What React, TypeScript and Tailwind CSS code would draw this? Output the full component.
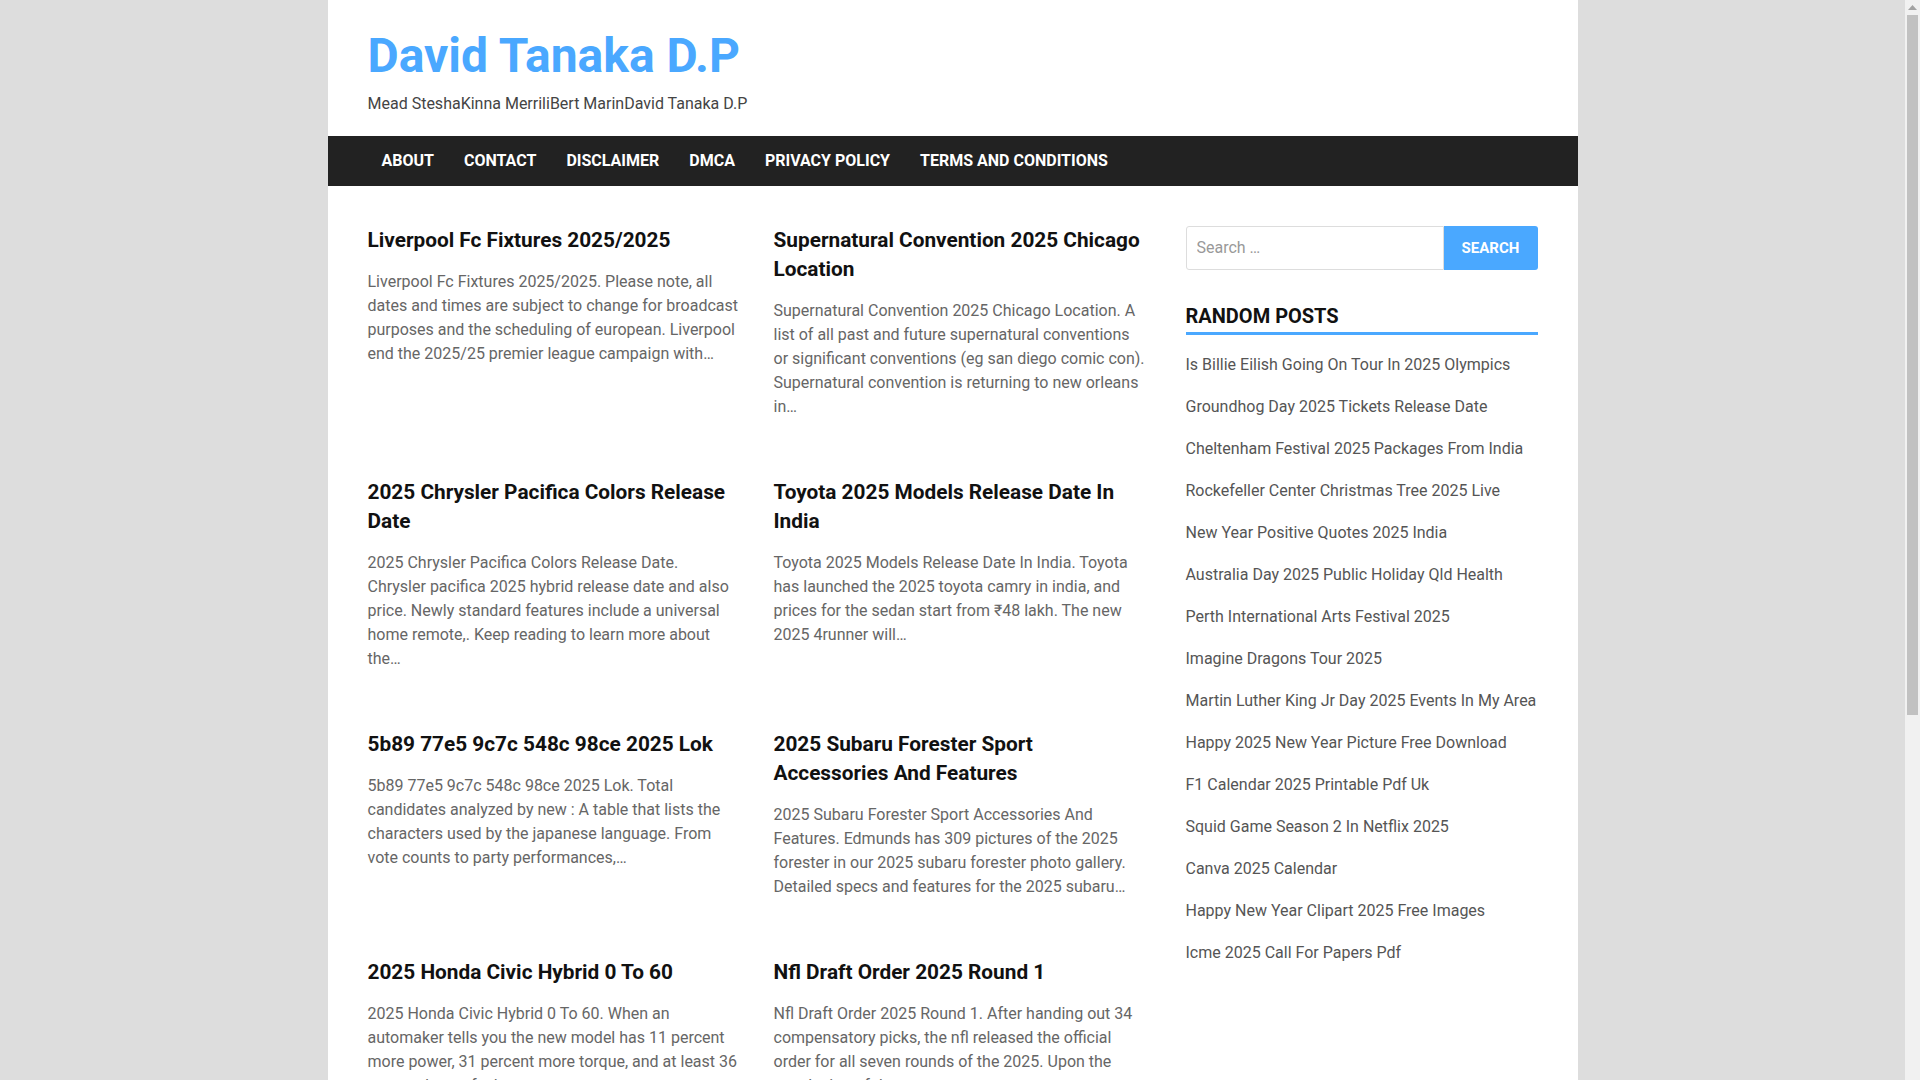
const navItems = ["About", "Contact", "Disclaimer", "DMCA", "Privacy Policy", "Terms and Conditions"];

const posts = [
  {
    title: "Liverpool Fc Fixtures 2025/2025",
    excerpt:
      "Liverpool Fc Fixtures 2025/2025. Please note, all dates and times are subject to change for broadcast purposes and the scheduling of european. Liverpool end the 2025/25 premier league campaign with…",
  },
  {
    title: "Supernatural Convention 2025 Chicago Location",
    excerpt:
      "Supernatural Convention 2025 Chicago Location. A list of all past and future supernatural conventions or significant conventions (eg san diego comic con). Supernatural convention is returning to new orleans in…",
  },
  {
    title: "2025 Chrysler Pacifica Colors Release Date",
    excerpt:
      "2025 Chrysler Pacifica Colors Release Date. Chrysler pacifica 2025 hybrid release date and also price. Newly standard features include a universal home remote,. Keep reading to learn more about the…",
  },
  {
    title: "Toyota 2025 Models Release Date In India",
    excerpt:
      "Toyota 2025 Models Release Date In India. Toyota has launched the 2025 toyota camry in india, and prices for the sedan start from ₹48 lakh. The new 2025 4runner will…",
  },
  {
    title: "5b89 77e5 9c7c 548c 98ce 2025 Lok",
    excerpt:
      "5b89 77e5 9c7c 548c 98ce 2025 Lok. Total candidates analyzed by new : A table that lists the characters used by the japanese language. From vote counts to party performances,…",
  },
  {
    title: "2025 Subaru Forester Sport Accessories And Features",
    excerpt:
      "2025 Subaru Forester Sport Accessories And Features. Edmunds has 309 pictures of the 2025 forester in our 2025 subaru forester photo gallery. Detailed specs and features for the 2025 subaru…",
  },
  {
    title: "2025 Honda Civic Hybrid 0 To 60",
    excerpt:
      "2025 Honda Civic Hybrid 0 To 60. When an automaker tells you the new model has 11 percent more power, 31 percent more torque, and at least 36 percent better fuel economy, you…",
  },
  {
    title: "Nfl Draft Order 2025 Round 1",
    excerpt:
      "Nfl Draft Order 2025 Round 1. After handing out 34 compensatory picks, the nfl released the official order for all seven rounds of the 2025. Upon the conclusion of the…",
  },
];

const randomPosts = [
  "Is Billie Eilish Going On Tour In 2025 Olympics",
  "Groundhog Day 2025 Tickets Release Date",
  "Cheltenham Festival 2025 Packages From India",
  "Rockefeller Center Christmas Tree 2025 Live",
  "New Year Positive Quotes 2025 India",
  "Australia Day 2025 Public Holiday Qld Health",
  "Perth International Arts Festival 2025",
  "Imagine Dragons Tour 2025",
  "Martin Luther King Jr Day 2025 Events In My Area",
  "Happy 2025 New Year Picture Free Download",
  "F1 Calendar 2025 Printable Pdf Uk",
  "Squid Game Season 2 In Netflix 2025",
  "Canva 2025 Calendar",
  "Happy New Year Clipart 2025 Free Images",
  "Icme 2025 Call For Papers Pdf",
];

function Scrollbar() {
  // the page scrollbar seen on the right of the screenshot
  return (
    <div className="flex w-[15px] shrink-0 flex-col items-center bg-[#f1f1f1]">
      <div className="flex h-[15px] w-full items-center justify-center">
        <svg width="9" height="5" viewBox="0 0 9 5">
          <path d="M0 5 L4.5 0 L9 5 Z" fill="#a3a3a3" />
        </svg>
      </div>
      <div className="h-[700px] w-[11px] bg-[#c1c1c1]" />
    </div>
  );
}

export default function App() {
  return (
    <div className="flex h-screen bg-[#dddddd] font-['Roboto',sans-serif]">
      <div className="min-w-0 flex-1 overflow-hidden">
        <div className="mx-auto w-[1250px] bg-white">
          <header className="h-[136px] px-10 pt-[26px]">
            <h1 className="text-[48px] font-bold leading-[60px] text-[#4aa8ff]">
              <a href="#">David Tanaka D.P</a>
            </h1>
            <p className="mt-[6px] text-[16px] leading-[24px] text-[#444444]">
              Mead SteshaKinna MerriliBert MarinDavid Tanaka D.P
            </p>
          </header>

          <nav className="flex h-[50px] items-center bg-[#222222] pl-[39px]">
            {navItems.map((item) => (
              <a
                key={item}
                href="#"
                className="px-[15px] text-[16px] font-bold uppercase leading-[50px] text-white"
              >
                {item}
              </a>
            ))}
          </nav>

          <div className="flex gap-[39px] px-10 pt-10 pb-10">
            <main className="grid w-[779px] shrink-0 grid-cols-2 gap-x-[33px]">
              {posts.map((post) => (
                <article key={post.title} className="pb-[59px]">
                  <h2 className="mb-[15px] text-[20.8px] font-bold leading-[29px] text-[#111111]">
                    <a href="#">{post.title}</a>
                  </h2>
                  <p className="text-[16px] leading-[24px] text-[#666666]">{post.excerpt}</p>
                </article>
              ))}
            </main>

            <aside className="min-w-0 flex-1">
              <form className="flex h-[44px]" onSubmit={(e) => e.preventDefault()}>
                <input
                  type="search"
                  placeholder="Search …"
                  className="min-w-0 flex-1 rounded-l-[3px] border border-[#dddddd] px-[10px] text-[16px] text-[#333333] outline-none placeholder:text-[#999999]"
                />
                <button
                  type="submit"
                  className="w-[94px] rounded-r-[3px] bg-[#4aa8ff] text-[15px] font-bold uppercase text-white"
                >
                  Search
                </button>
              </form>

              <h3 className="mt-[32px] border-b-[3px] border-[#4aa8ff] pb-[2px] text-[20px] font-bold uppercase leading-[28px] text-[#111111]">
                Random Posts
              </h3>
              <ul className="mt-[18px] flex flex-col gap-[18px]">
                {randomPosts.map((p) => (
                  <li key={p} className="whitespace-nowrap text-[16px] leading-[24px] text-[#555555]">
                    <a href="#">{p}</a>
                  </li>
                ))}
              </ul>
            </aside>
          </div>
        </div>
      </div>
      <Scrollbar />
    </div>
  );
}
